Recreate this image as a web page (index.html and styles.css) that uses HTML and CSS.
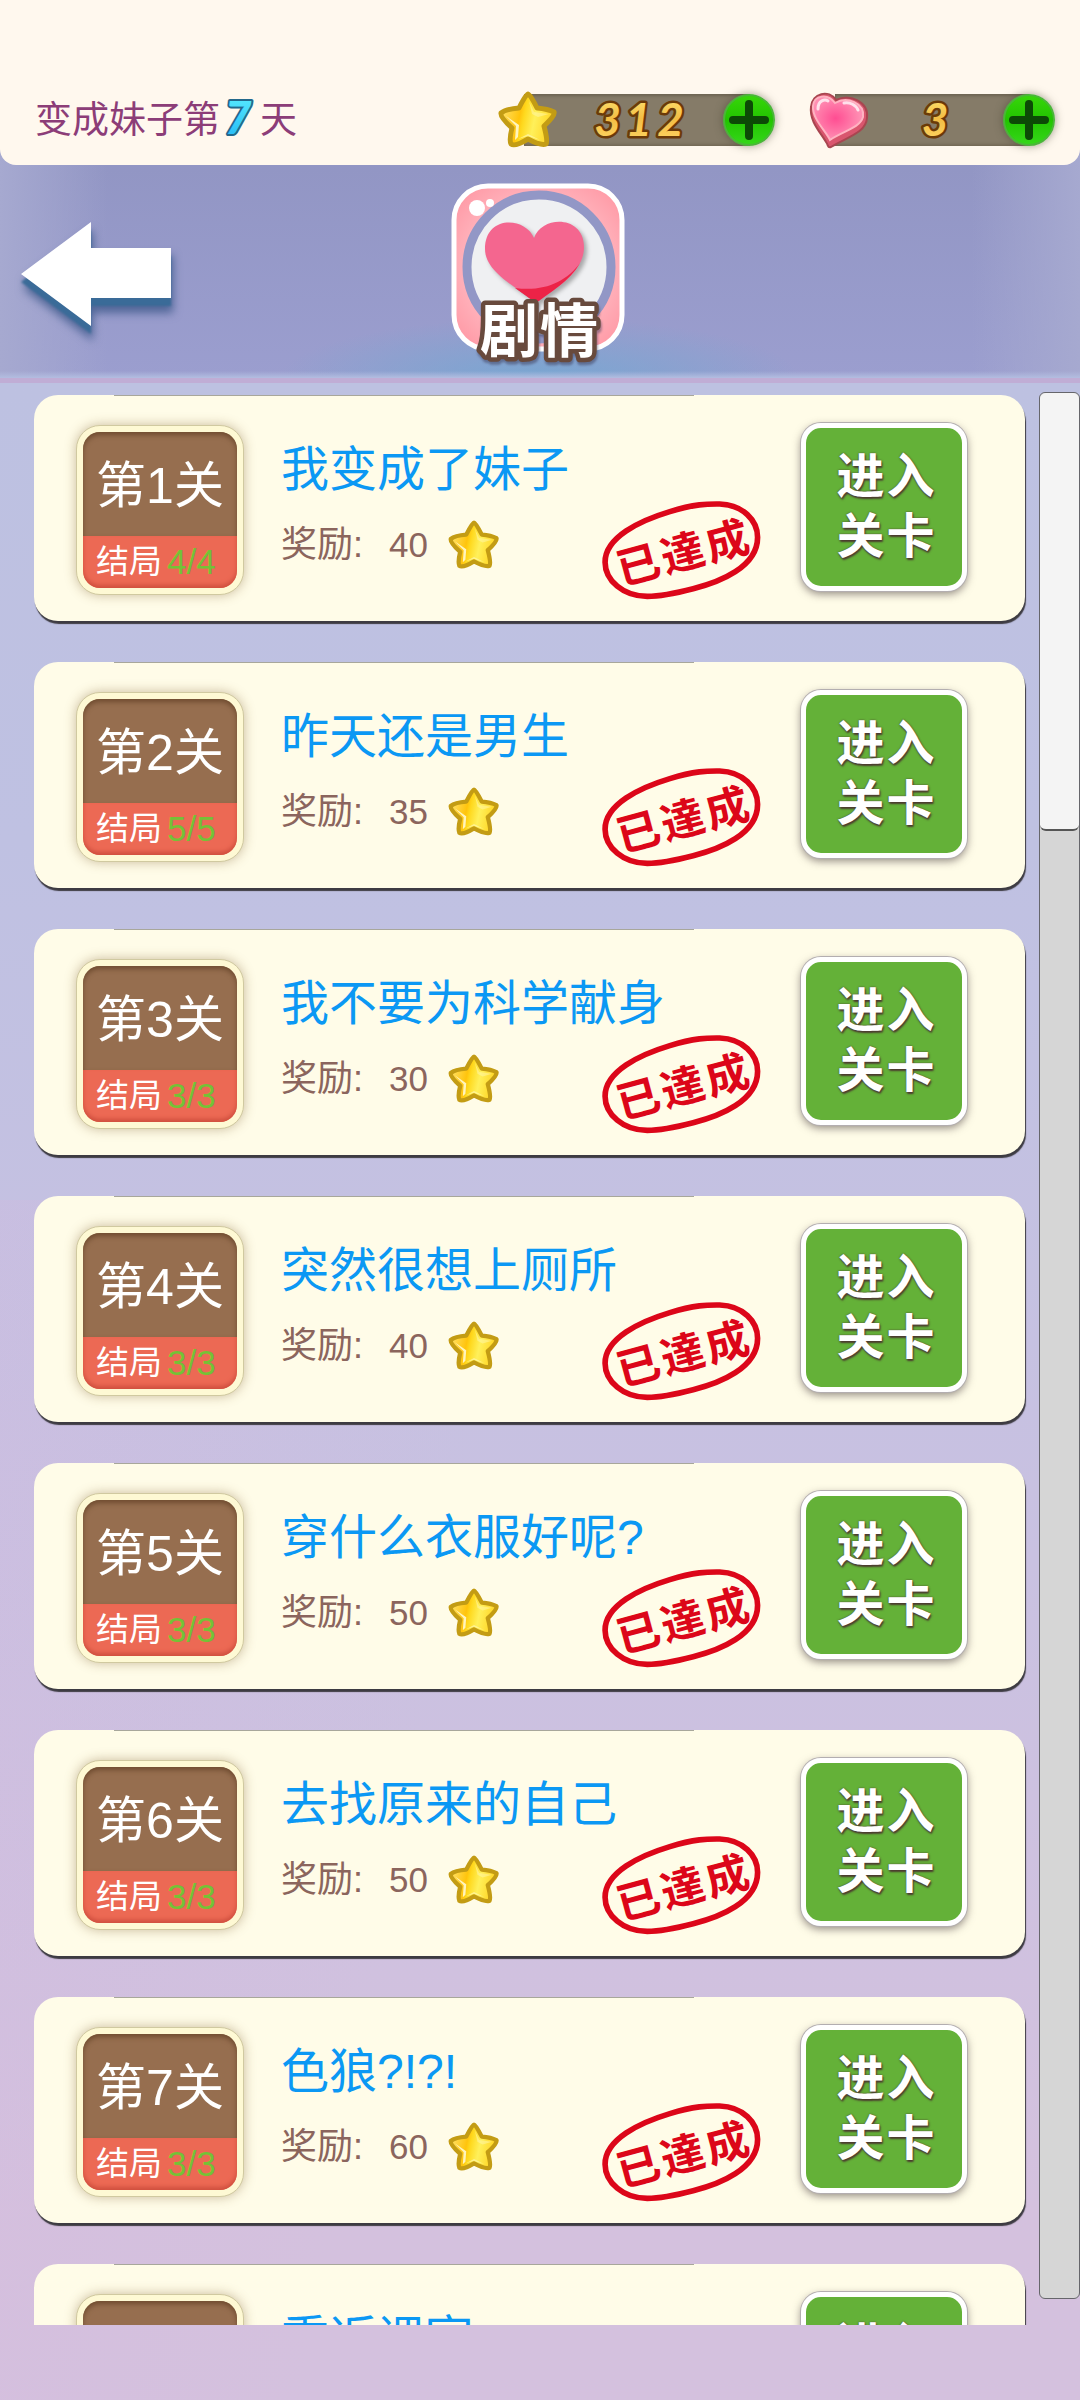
FILE: index.html
```html
<!DOCTYPE html>
<html lang="zh-CN">
<head>
<meta charset="utf-8">
<meta name="viewport" content="width=device-width, initial-scale=1">
<title>剧情</title>
<link rel="stylesheet" href="styles.css">
</head>
<body>
<svg class="defs" aria-hidden="true">
  <defs>
    <linearGradient id="gold" x1="0" y1="0" x2="0" y2="1"><stop offset="0" stop-color="#ffe978"/><stop offset=".5" stop-color="#f3bd45"/><stop offset="1" stop-color="#ffd866"/></linearGradient>
    <linearGradient id="cyan" x1="0" y1="0" x2="0" y2="1"><stop offset="0" stop-color="#5ff2ff"/><stop offset="1" stop-color="#1fb4f5"/></linearGradient>
    <linearGradient id="starFill" x1="0" y1="0" x2="1" y2=".2"><stop offset="0" stop-color="#ffe678"/><stop offset=".42" stop-color="#ffc40c"/><stop offset=".5" stop-color="#ffd91e"/><stop offset=".7" stop-color="#fff05a"/><stop offset="1" stop-color="#ffd728"/></linearGradient>
    <radialGradient id="heartFill" cx=".45" cy=".5" r=".5"><stop offset="0" stop-color="#ff4d92"/><stop offset="1" stop-color="#ff8fb3"/></radialGradient>
    <linearGradient id="plusFill" x1="0" y1="0" x2="0" y2="1"><stop offset="0" stop-color="#38d60a"/><stop offset=".5" stop-color="#22c400"/><stop offset="1" stop-color="#35d81a"/></linearGradient>
    <symbol id="star" viewBox="0 0 60 58">
      <path d="M30 3Q32 3 39 17Q50 18 56 21Q58 24 46 35Q50 50 48 53Q43 55 30 48Q17 56 13 53Q11 49 14 37Q2 26 3 22Q8 18 21 17Q28 3 30 3Z" fill="url(#starFill)" stroke="#c39c14" stroke-width="5" stroke-linejoin="round"/>
      <path d="M8 25L18 35L17 49L20 46L21 34Z" fill="#fffad0" opacity=".9"/>
      <path d="M31 10L36 21L51 23L40 26L34 23Z" fill="#fff9b8" opacity=".45"/>
      <path d="M20 48L30 43L42 49L30 45Z" fill="#fff6b0" opacity=".7"/>
    </symbol>
    <symbol id="plus" viewBox="0 0 52 52">
      <circle cx="26" cy="26" r="25" fill="url(#plusFill)" stroke="#4bb53a" stroke-width="2"/>
      <path d="M26 10V42M10 26H42" stroke="#0c4a06" stroke-width="8" stroke-linecap="round"/>
    </symbol>
    <symbol id="stamp" viewBox="120 355 490 310" overflow="visible">
      <path d="M135 545C135 470 240 420 330 393C410 368 450 370 480 370C550 372 594 420 594 470C594 560 480 605 400 625C330 643 290 648 262 648C190 648 135 600 135 545Z" fill="none" stroke="#dc0619" stroke-width="17"/>
      <g class="stamp-text" transform="rotate(-15 370 515)"><text x="230" y="564">已</text><text x="368" y="564">達</text><text x="506" y="564">成</text></g>
    </symbol>
  </defs>
</svg>
<div class="app">
  <header class="status">
    <p class="day">变成妹子第<svg class="day-num" viewBox="0 0 36 44"><text x="16" y="39" text-anchor="middle">7</text></svg>天</p>
    <div class="wallet">
      <div class="meter stars">
        <svg class="meter-icon" viewBox="0 0 60 58"><use href="#star"/></svg>
        <svg class="amount" viewBox="0 0 110 52"><text x="26" y="42">3</text><text x="57" y="42">1</text><text x="89" y="42">2</text></svg>
        <button class="add" aria-label="增加星星"><svg viewBox="0 0 52 52"><use href="#plus"/></svg></button>
      </div>
      <div class="meter hearts">
        <svg class="meter-icon" viewBox="0 0 60 58">
          <path d="M2 16C3 2 20-2 27 9C41 2 60 11 58 27C57 42 38 46 22 56C18 57 20 55 17 51C12 42 0 30 2 16Z" fill="#d9566e" stroke="#a84650" stroke-width="2"/>
          <path d="M4 15C5 4 19 2 26 12C38 5 56 12 54 26C51 37 34 40 21 49C17 40 3 28 4 15Z" fill="url(#heartFill)" stroke="#ffb3c2" stroke-width="2"/>
          <path d="M9 18C9 9 16 8 19 10M35 12C41 11 47 14 49 19" fill="none" stroke="#fff" stroke-width="3" stroke-linecap="round" opacity=".75"/>
        </svg>
        <svg class="amount" viewBox="0 0 110 52"><text x="58" y="42">3</text></svg>
        <button class="add" aria-label="增加爱心"><svg viewBox="0 0 52 52"><use href="#plus"/></svg></button>
      </div>
    </div>
  </header>
  <nav class="banner">
    <button class="back" aria-label="返回">
      <svg viewBox="0 0 170 130"><path d="M1 59L71 7V33H151V83H71V111Z" fill="#fff"/></svg>
    </button>
    <h1 class="logo">
      <svg viewBox="0 0 174 184" role="img" aria-label="剧情">
        <defs><radialGradient id="tile" cx=".5" cy=".5" r=".7"><stop offset=".6" stop-color="#ffb3bc"/><stop offset="1" stop-color="#ff929f"/></radialGradient></defs>
        <rect x="3" y="3" width="168" height="163" rx="34" fill="url(#tile)" stroke="#fff" stroke-width="5"/>
        <circle cx="88" cy="84" r="72" fill="#eff0f2" stroke="#9297c6" stroke-width="9"/>
        <circle cx="26" cy="25" r="8" fill="#fff"/><circle cx="39" cy="20" r="4" fill="#fff"/>
        <path class="logo-heart" d="M83 55C75 34 34 31 34 66C34 90 68 105 85 120C105 105 133 90 133 64C133 32 91 32 83 55Z" fill="#f4668f"/>
        <path d="M64 105C93 109 115 99 129 80C119 98 98 110 85 120Z" fill="#ec2347"/>
        <text class="logo-text" x="29" y="169">剧</text><text class="logo-text" x="89" y="169">情</text>
      </svg>
    </h1>
  </nav>
  <main class="content">
    <ol class="levels" id="levels"></ol>
    <div class="track"><div class="thumb"></div></div>
  </main>
</div>
<script src="levels.js"></script>
</body>
</html>
```
FILE: levels.js
```js
const levels = [
  ["我变成了妹子", 40, "4/4"],
  ["昨天还是男生", 35, "5/5"],
  ["我不要为科学献身", 30, "3/3"],
  ["突然很想上厕所", 40, "3/3"],
  ["穿什么衣服好呢?", 50, "3/3"],
  ["去找原来的自己", 50, "3/3"],
  ["色狼?!?!", 60, "3/3"],
  ["重返课室", 60, "3/3"]
];

document.getElementById("levels").innerHTML = levels.map(([title, reward, endings], i) => `
  <li class="card">
    <div class="badge">
      <div class="badge-level">第${i + 1}关</div>
      <div class="badge-endings">结局<span class="count">${endings}</span></div>
    </div>
    <div class="info">
      <h2 class="title">${title}</h2>
      <div class="reward">奖励:<span class="reward-num">${reward}</span><svg class="reward-star" viewBox="0 0 60 58"><use href="#star"/></svg></div>
    </div>
    <svg class="stamp" viewBox="0 0 163 103"><use href="#stamp"/></svg>
    <button class="enter"><span>进</span><span>入</span><span>关</span><span>卡</span></button>
  </li>`).join("");
```
FILE: styles.css
```css
* { box-sizing: border-box; }

body {
  margin: 0;
  font-family: "Liberation Sans", "Noto Sans CJK SC", sans-serif;
}

h1, h2, p, ol { margin: 0; padding: 0; font-weight: 400; }
button { padding: 0; border: 0; background: none; font: inherit; cursor: pointer; }
svg { display: block; overflow: visible; }
.defs { position: absolute; width: 0; height: 0; }

.app {
  display: flex;
  flex-direction: column;
  height: 100vh;
  overflow: hidden;
  background:
    linear-gradient(100deg, rgba(216, 180, 222, .2), transparent 40%) 0 100% / 100% 50% no-repeat,
    linear-gradient(#bdc1e1 16%, #bfc1e2 35%, #c9c1e1 65%, #d4c1de 92%);
}

/* Top bar */
.status {
  display: flex;
  justify-content: space-between;
  align-items: flex-end;
  height: 165px;
  flex: none;
  padding: 0 25px 13px 35px;
  background: #fff8ee;
  border-radius: 0 0 16px 16px;
  position: relative;
  z-index: 1;
}
.day {
  display: flex;
  align-items: center;
  height: 70px;
  font-size: 37px;
  color: #8c3d78;
}
.day-num { width: 40px; height: 44px; }
.day-num text {
  font: italic 900 46px Lato, sans-serif;
  fill: url(#cyan);
  stroke: #23698c;
  stroke-width: 4px;
  stroke-linejoin: round;
  paint-order: stroke;
}
.wallet { display: flex; gap: 34px; }
.meter {
  display: flex;
  align-items: center;
  height: 64px;
}
.meter-icon { width: 60px; height: 58px; position: relative; z-index: 1; }
.amount {
  width: 194px;
  height: 52px;
  margin: 0 -26px 0 -34px;
  background: #857b68;
  box-shadow: inset 0 2px 3px #6d6453, inset 0 -2px 3px #756b58;
}
.stars .amount { width: 225px; }
.amount text {
  font: italic 700 46px Lato, sans-serif;
  fill: url(#gold);
  stroke: #6b3a08;
  stroke-width: 5px;
  stroke-linejoin: round;
  paint-order: stroke;
  text-anchor: middle;
}
.add {
  width: 52px;
  height: 52px;
  border-radius: 50%;
  box-shadow: 0 0 8px rgba(60, 60, 40, .5);
}

/* Banner, tucked under the rounded corners of the top bar */
.banner {
  display: grid;
  grid-template-columns: 1fr auto 1fr;
  align-items: start;
  height: 238px;
  flex: none;
  margin-top: -20px;
  padding: 38px 24px 0 20px;
  border-bottom: 5px solid #c0add5;
  background:
    linear-gradient(transparent 226px, #b3bde0 233px),
    radial-gradient(ellipse 260px 60px at 50% 100%, #78a6d1, transparent),
    linear-gradient(90deg, #a6a9d0, transparent 10%, transparent 90%, #a6a9d0),
    linear-gradient(#9195c3, #9b9ecf);
}
.back { width: 170px; height: 130px; margin-top: 32px; }
.back svg { filter: drop-shadow(0 8px 1px #3a6b98) drop-shadow(2px 7px 4px rgba(50, 80, 130, .7)); }
.logo svg { width: 174px; height: 184px; }
.logo-heart { filter: drop-shadow(3px 3px 2px rgba(0, 0, 0, .3)); }
.logo-text {
  font: 700 58px "Liberation Sans", "Noto Sans CJK SC", sans-serif;
  fill: #fff;
  stroke: #684a3d;
  stroke-width: 9px;
  stroke-linejoin: round;
  paint-order: stroke;
  filter: drop-shadow(1px 3px 1px rgba(60, 60, 90, .5));
}

/* Level list */
.content {
  display: flex;
  flex: 1;
  min-height: 0;
  padding: 9px 0 75px 34px;
}
.levels {
  flex: 1;
  display: flex;
  flex-direction: column;
  gap: 41px;
  list-style: none;
  padding: 3px 14px 0 0;
  overflow: hidden;
}
.card {
  display: flex;
  align-items: flex-start;
  flex: none;
  height: 226px;
  padding: 28px 58px 0 42px;
  border-radius: 24px;
  background: linear-gradient(#a8a79b, #a8a79b) 80px 0 / 580px 1px no-repeat, #fffce8;
  box-shadow: 1px 3px 1px #3d3b42;
}
.badge {
  display: flex;
  flex-direction: column;
  width: 168px;
  height: 170px;
  margin-top: 2px;
  border: 1px solid #d0c9a0;
  border-radius: 24px;
  padding: 6px;
  background: #fef9d4;
  box-shadow: 0 0 12px rgba(120, 90, 40, .4);
  color: #fff;
}
.badge-level {
  height: 104px;
  border-radius: 17px 17px 0 0;
  background: #966e4f;
  box-shadow: inset 0 3px 5px #6f4c30;
  font-size: 50px;
  line-height: 108px;
  text-align: center;
  white-space: nowrap;
}
.badge-endings {
  display: flex;
  align-items: center;
  flex: 1;
  gap: 5px;
  padding-left: 13px;
  border-radius: 0 0 17px 17px;
  background: #ec6954;
  box-shadow: inset 0 -3px 4px #cf4f3e;
  font-size: 33px;
  line-height: 46px;
}
.count { font-size: 35px; color: #74c236; }
.info {
  flex: 1;
  min-width: 0;
  padding: 12px 0 0 37px;
}
.title {
  font-size: 48px;
  line-height: 70px;
  white-space: nowrap;
  color: #0b98f4;
}
.reward {
  display: flex;
  align-items: center;
  height: 80px;
  font-size: 36px;
  line-height: 84px;
  color: #8b655d;
}
.reward-num { margin: 0 20px 0 26px; font-size: 35px; }
.reward-star { width: 52px; height: 50px; }
.stamp { width: 163px; height: 103px; margin: 76px 38px 0 0; flex: none; }
.stamp-text {
  font: 700 130px "Liberation Sans", "Noto Sans CJK TC", sans-serif;
  fill: #dc0619;
  text-anchor: middle;
}
.enter {
  display: grid;
  grid-template-columns: 50px 50px;
  grid-auto-rows: 60px;
  place-content: center;
  width: 166px;
  height: 168px;
  flex: none;
  padding-left: 3px;
  border: 5px solid #fff;
  border-radius: 20px;
  background: #64b138;
  box-shadow: 0 0 0 1px #b3aeb0, 0 3px 8px rgba(70, 60, 60, .6);
  color: #fff;
  font-size: 48px;
  font-weight: 700;
  line-height: 60px;
  text-shadow: 0 0 2px #4c3a30, 1px 2px 2px #4c3a30;
}

/* Scrollbar */
.track {
  width: 41px;
  flex: none;
  margin-bottom: 26px;
  border: 1px solid #66666b;
  border-radius: 6px;
  background: #d6d6d6;
}
.thumb {
  height: 23%;
  border-bottom: 2px solid #555;
  border-radius: 6px;
  background: #f4f4f4;
}
```
